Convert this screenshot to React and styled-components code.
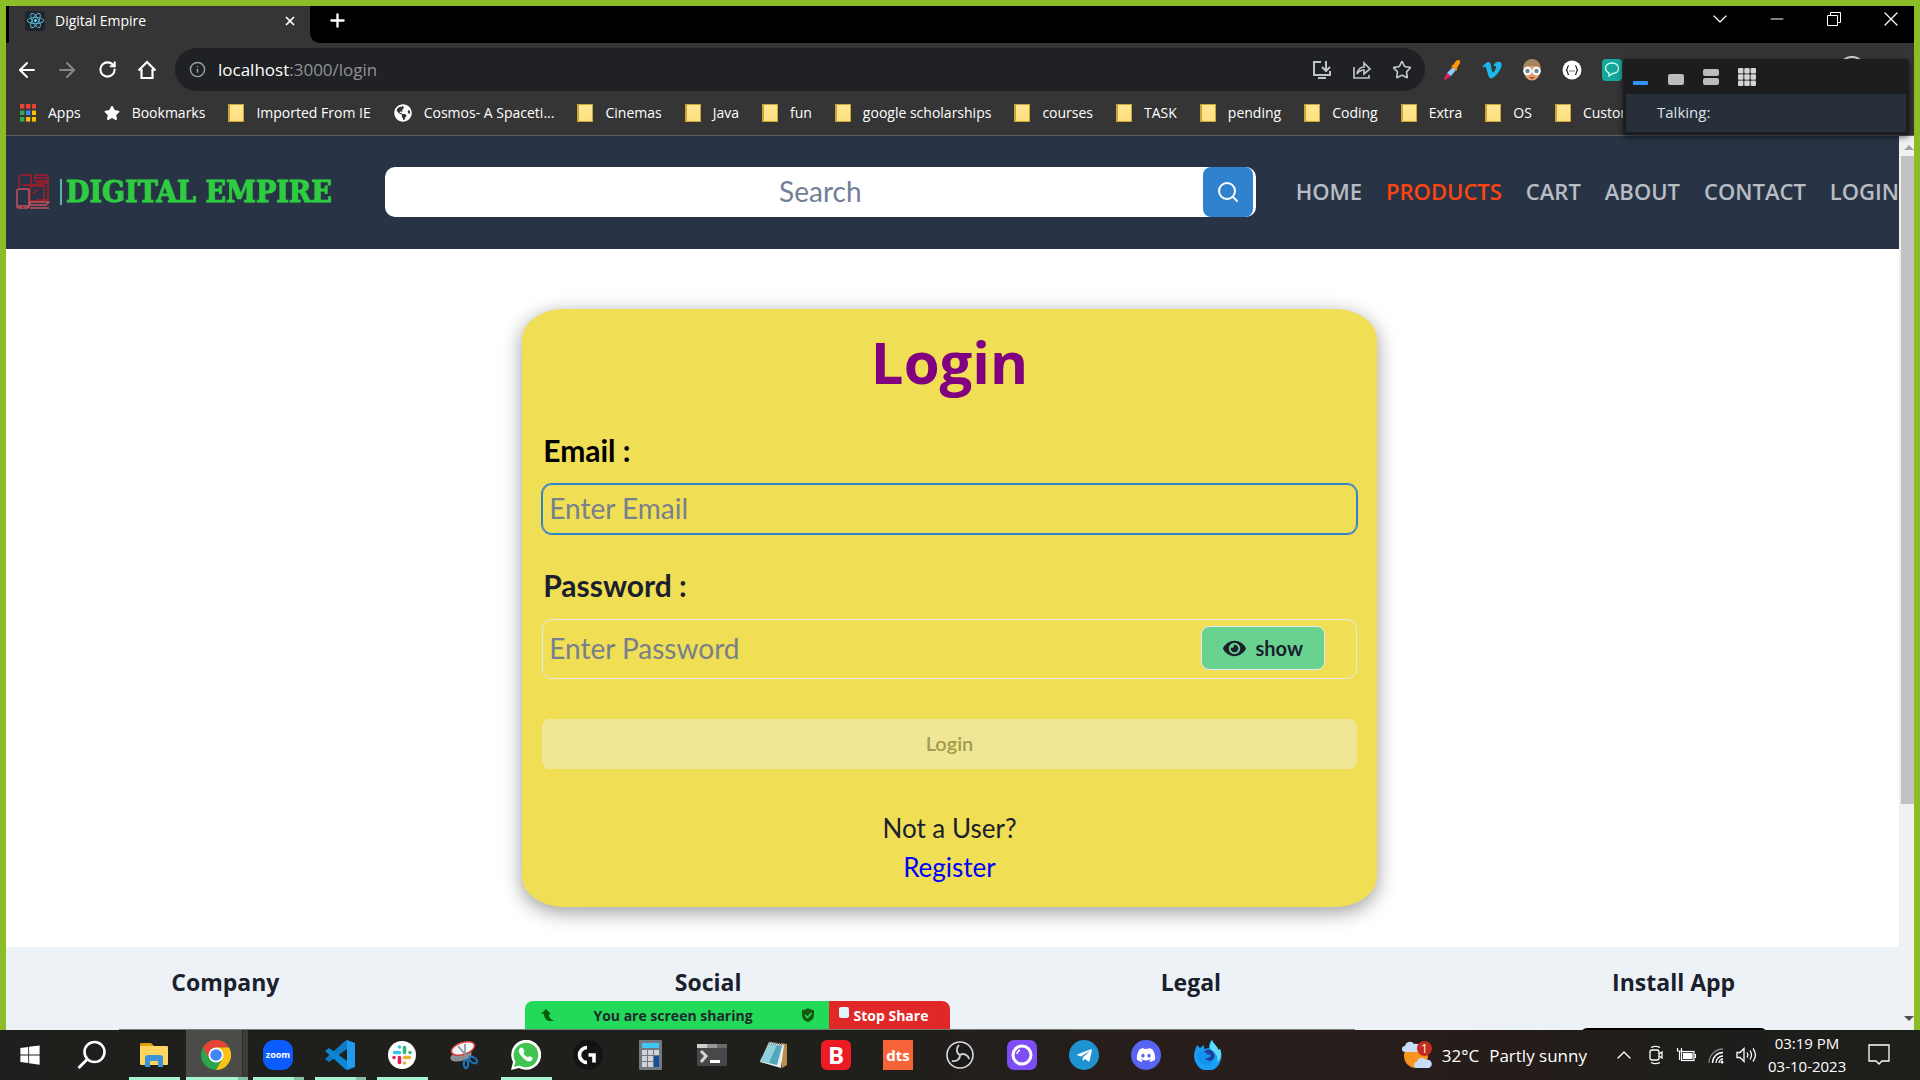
import React from 'react';
import styled, { createGlobalStyle } from 'styled-components';
import {
  ArrowLeft, ArrowRight, RotateCw, Info, MonitorDown, Star, Search,
  Puzzle, PanelRight, MoreVertical, ChevronDown, ChevronUp, Minus, X, Plus,
} from 'lucide-react';
import { FaReact, FaEye, FaVimeoV, FaWindows, FaTelegramPlane, FaDiscord, FaStar, FaGlobeAmericas } from 'react-icons/fa';

const ui = '"Open Sans", "Noto Sans", sans-serif';
const form = 'Lato, "Open Sans", sans-serif';

const GlobalStyle = createGlobalStyle`
  *, *::before, *::after { box-sizing: border-box; }
  body { margin: 0; font-family: ${ui}; overflow: hidden; }
  button, input { font: inherit; color: inherit; margin: 0; }
  button { border: 0; background: none; padding: 0; cursor: pointer; }
  a { text-decoration: none; color: inherit; }
  h1, h2, p { margin: 0; }
  svg { display: block; flex: none; }
`;

/* ---------- desktop ---------- */

const Desktop = styled.div`
  position: relative;
  height: 100vh;
  display: flex;
  flex-direction: column;
  overflow: hidden;
`;

const SharedWindow = styled.div`
  position: relative;
  flex: 1;
  min-height: 0;
  display: flex;
  flex-direction: column;
`;

const ShareFrame = styled.div`
  position: absolute;
  inset: 0;
  border: 6px solid #8cbd28;
  border-bottom: 0;
  pointer-events: none;
`;

/* ---------- browser chrome ---------- */

const TabStrip = styled.div`
  display: flex;
  align-items: stretch;
  height: 43px;
  padding-left: 9px;
  background: #000;
  color: #fff;
`;

const Tab = styled.div`
  position: relative;
  display: flex;
  align-items: center;
  width: 301px;
  padding: 0 13px 2px 16px;
  background: #353535;
  font-size: 14px;
  &::after {
    content: '';
    position: absolute;
    left: 100%;
    bottom: 0;
    width: 10px;
    height: 10px;
    background: radial-gradient(circle at 100% 0, transparent 10px, #353535 10px);
  }
`;

const TabIcon = styled.span`
  display: grid;
  place-items: center;
  width: 20px;
  height: 20px;
  margin-right: 10px;
  border-radius: 3px;
  background: #20232a;
  color: #61dafb;
`;

const TabTitle = styled.span`
  flex: 1;
`;

const IconButton = styled.button`
  display: grid;
  place-items: center;
  width: ${p => p.$w || 40}px;
  height: 40px;
  color: ${p => p.$color || '#fff'};
`;

const WindowControls = styled.div`
  display: flex;
  align-items: center;
  margin: 0 1px 0 auto;
  height: 38px;
`;

const Toolbar = styled.div`
  display: flex;
  align-items: center;
  height: 53px;
  padding: 0 8px 0 7px;
  background: #353535;
`;

const AddressBar = styled.div`
  flex: 1;
  display: flex;
  align-items: center;
  height: 43px;
  margin: 0 7px 0 8px;
  padding: 0 3px 0 14px;
  border-radius: 22px;
  background: #202124;
  color: #9aa0a6;
  font-size: 17px;
`;

const Url = styled.span`
  flex: 1;
  padding-left: 12px;
  color: #8f9296;
  b { font-weight: 400; color: #fff; }
`;

const BookmarksBar = styled.div`
  display: flex;
  align-items: center;
  gap: 23px;
  height: 40px;
  padding: 0 20px 6px;
  border-bottom: 1px solid #5c605f;
  background: #353535;
  color: #fff;
  font-size: 14px;
  overflow: hidden;
`;

const Bookmark = styled.a`
  display: flex;
  align-items: center;
  gap: 12px;
  line-height: 20px;
  white-space: nowrap;
`;

const Folder = styled.span`
  width: 16px;
  height: 18px;
  border: 1px solid #c9a437;
  border-left-width: 2px;
  background: linear-gradient(#ffe794, #ffdf80);
`;

/* ---------- web page ---------- */

const Viewport = styled.div`
  flex: 1;
  min-height: 0;
  display: flex;
`;

const Page = styled.div`
  flex: 1;
  min-width: 0;
  overflow: hidden;
  background: #fff;
`;

const ScrollTrack = styled.div`
  width: 21px;
  padding: 9px 6px 9px 2px;
  display: flex;
  flex-direction: column;
  align-items: flex-end;
  background: #f1f1f1;
`;

const ScrollThumb = styled.div`
  align-self: stretch;
  height: 74%;
  margin: 6px 0 auto;
  background: #c1c1c1;
`;

const Header = styled.header`
  display: flex;
  align-items: center;
  height: 113px;
  padding: 0 0 2px 16px;
  background: #283445;
`;

const Logo = styled.a`
  display: flex;
  align-items: center;
  width: 318px;
  margin-right: 51px;
  color: #2ecc40;
  font: bold 30px/50px "DejaVu Serif Condensed", "DejaVu Serif", serif;
  -webkit-text-stroke: 1px #2ecc40;
  white-space: nowrap;
`;

const LogoRule = styled.span`
  width: 2px;
  height: 26px;
  margin: 0 4px 0 10px;
  background: #5fb3ae;
`;

const SearchBox = styled.form`
  flex: 1;
  display: flex;
  height: 50px;
  padding-right: 3px;
  border-radius: 10px;
  background: #fff;
`;

const SearchInput = styled.input`
  flex: 1;
  min-width: 0;
  padding: 0 0 2px 53px;
  border: 0;
  outline: 0;
  background: none;
  text-align: center;
  font: 400 28px ${form};
  &::placeholder { color: #718096; opacity: 1; }
`;

const SearchButton = styled.button`
  display: grid;
  place-items: center;
  width: 50px;
  border-radius: 8px;
  background: #3182ce;
  color: #fff;
`;

const Nav = styled.nav`
  display: flex;
  gap: 24px;
  margin-left: 40px;
  padding-bottom: 2px;
`;

const NavLink = styled.a`
  color: ${p => (p.$active ? '#ff4410' : '#b9bdc3')};
  font-size: 22px;
  font-weight: 600;
`;

const Card = styled.form`
  display: flex;
  flex-direction: column;
  width: 45%;
  margin: 60px auto 40px;
  padding: 20px;
  border-radius: 5%;
  background: #f0de55;
  box-shadow: 0 5px 20px rgba(0, 0, 0, 0.4);
  color: #1a202c;
  font-family: ${form};
`;

const Title = styled.h1`
  margin-bottom: 4px;
  color: #800080;
  font: 700 58px/66px ${ui};
  text-align: center;
`;

const Label = styled.label`
  margin: 35px 0 18px 1px;
  font-size: 30px;
  line-height: 32px;
  font-weight: 700;
  color: ${p => (p.$dark ? '#000' : '#1a202c')};
`;

const Field = styled.div`
  display: flex;
  align-items: center;
  height: ${p => p.$h}px;
  padding-bottom: 2px;
  border: 1px solid ${p => (p.$focus ? '#3182ce' : '#e2e8f0')};
  border-radius: 10px;
  box-shadow: ${p => (p.$focus ? '0 0 0 1px #3182ce' : 'none')};
`;

const FieldInput = styled.input`
  flex: 1;
  min-width: 0;
  height: 100%;
  padding: 0 6px;
  border: 0;
  outline: 0;
  background: none;
  font-size: 28px;
  &::placeholder { color: #77808c; opacity: 1; }
`;

const ShowButton = styled.button`
  display: flex;
  align-items: center;
  justify-content: center;
  gap: 10px;
  width: 124px;
  height: 44px;
  margin-right: 31px;
  border: 1px solid #e2e8f0;
  border-radius: 8px;
  background: #68d391;
  font-size: 20px;
  font-weight: 700;
`;

const SubmitButton = styled.button`
  height: 50px;
  margin: 40px 0;
  padding-bottom: 2px;
  border-radius: 8px;
  background: #efe796;
  color: #a49c4c;
  font-size: 20px;
  font-weight: 600;
`;

const Note = styled.p`
  font-size: 26px;
  line-height: 39px;
  text-align: center;
  a { color: #0000ff; }
`;

const Footer = styled.footer`
  display: grid;
  grid-template-columns: repeat(4, 1fr);
  gap: 32px;
  min-height: 240px;
  padding-top: 20px;
  background: #edf2f7;
  color: #1a202c;
  text-align: center;
`;

const FooterTitle = styled.h2`
  font-size: 23px;
  line-height: 30px;
  font-weight: 700;
`;

const StoreBadge = styled.div`
  width: 186px;
  height: 56px;
  margin: 31px auto 0;
  border-radius: 6px;
  background: #000;
`;

/* ---------- meeting overlays ---------- */

const TalkPanel = styled.div`
  position: absolute;
  top: 59px;
  right: 11px;
  width: 286px;
  padding: 0 3px 3px;
  border-radius: 4px;
  background: #1c1d1f;
  box-shadow: 0 2px 6px rgba(0, 0, 0, 0.6);
`;

const TalkTools = styled.div`
  display: flex;
  gap: 19px;
  height: 35px;
  padding: 6px 0 0 7px;
`;

const TalkBody = styled.div`
  height: 38px;
  padding-left: 31px;
  background: #27303a;
  color: #dfe2e5;
  font-size: 15px;
  line-height: 36px;
`;

const ShareDock = styled.div`
  position: absolute;
  left: 119px;
  bottom: 0;
  width: 1236px;
  display: flex;
  justify-content: center;
  border-bottom: 1px solid #777b78;
`;

const ShareStatus = styled.div`
  display: flex;
  align-items: center;
  width: 304px;
  height: 28px;
  padding: 0 14px 0 16px;
  border-top-left-radius: 8px;
  background: #23d959;
  color: #1f2a2c;
  font-size: 14px;
  font-weight: 700;
  span { flex: 1; padding-right: 8px; text-align: center; }
`;

const StopButton = styled.button`
  display: flex;
  align-items: center;
  gap: 5px;
  width: 121px;
  height: 28px;
  padding-left: 10px;
  border-top-right-radius: 8px;
  background: #e02828;
  color: #fff;
  font-size: 14px;
  font-weight: 700;
  &::before {
    content: '';
    width: 10px;
    height: 11px;
    margin-bottom: 5px;
    border-radius: 2px;
    background: #dff7fa;
  }
`;

/* ---------- taskbar ---------- */

const Taskbar = styled.div`
  display: flex;
  height: 50px;
  background: linear-gradient(90deg, #1f201d 0%, #1f1f1c 45%, #281e1b 62%, #261d1a 78%, #1d1e1b 90%, #1d1f1b 100%);
  color: #fff;
`;

const TaskButton = styled.button`
  position: relative;
  display: grid;
  place-items: center;
  width: 62px;
  height: 50px;
  padding-right: 2px;
  background: ${p => (p.$active ? 'linear-gradient(90deg, #4b4b48 56px, #2c2c2a 56px, #2c2c2a 57px, #3b3b39 57px)' : 'none')};
  &::after {
    content: '';
    position: absolute;
    left: ${p => (p.$active ? 0 : 5)}px;
    right: ${p => (p.$active ? 0 : 6)}px;
    bottom: 0;
    height: 3px;
    background: ${p => (p.$stack ? 'linear-gradient(270deg, #86c2a5 10px, #a6f4d0 10px)' : '#a6f4d0')};
    opacity: ${p => (p.$open ? 1 : 0)};
  }
`;

const Tray = styled.div`
  display: flex;
  align-items: center;
  gap: 10px;
  margin-left: auto;
  padding-right: 30px;
  font-size: 17px;
`;

const Weather = styled.button`
  display: flex;
  align-items: center;
  gap: 10px;
  margin-right: 15px;
`;

const Clock = styled.time`
  width: 78px;
  margin-right: 12px;
  font-size: 15px;
  line-height: 23px;
  text-align: center;
  white-space: nowrap;
`;

/* ---------- drawings ---------- */

const AppsGrid = () => (
  <svg width="16" height="18" viewBox="0 0 16 18">
    {['#ea4335', '#ea4335', '#ea4335', '#34a853', '#4285f4', '#fbbc05', '#34a853', '#fbbc05', '#fbbc05'].map((c, i) => (
      <rect key={i} x={(i % 3) * 6} y={Math.floor(i / 3) * 6.5} width="4.4" height="4.6" fill={c} />
    ))}
  </svg>
);

const HomeOutline = () => (
  <svg width="20" height="20" viewBox="0 0 20 20" fill="none" stroke="#fff" strokeWidth="2.2">
    <path d="M1.500 10.500L10 2l8.500 8.500M4.500 9v9h11V9" />
  </svg>
);

const Devices = () => (
  <svg width="34" height="36" viewBox="0 0 34 36" fill="none" stroke="#a51d2a" strokeWidth="1.5">
    <path d="M3 14V3l2-2h10v9M19 1h13v6H19zM19 4h13M20 9h12v17H20" />
    <path d="M14 12h14v15H14zM6 11h22M17 20l5-5" />
    <rect x="1" y="15" width="12" height="19" rx="2" stroke="#c2525c" />
    <path d="M1 32h12M14 31h16l3-3H14zM14 34h19" stroke="#c2525c" />
    <path d="M6 33h2" />
  </svg>
);

const Restore = () => (
  <svg width="14" height="14" viewBox="0 0 14 14" fill="none" stroke="#fff">
    <path d="M.5 3.5h10v10H.5zM3.5 3V.5h10v10H11" />
  </svg>
);

const ShareIcon = () => (
  <svg width="20" height="20" viewBox="0 0 20 20" fill="none" stroke="currentColor" strokeWidth="1.7">
    <path d="M2 7v11h15v-3M5 14c1-5 4-7 7-7V3l6 6-6 5v-4c-3 0-5 1-7 4z" />
  </svg>
);

const InstallIcon = () => (
  <svg width="20" height="20" viewBox="0 0 20 20" fill="none" stroke="currentColor" strokeWidth="2">
    <path d="M9 2H2v13h16v-4M14 1v9M10 7l4 4 4-4M6 18h8" />
  </svg>
);

const Picker = () => (
  <svg width="20" height="22" viewBox="0 0 20 22">
    <path d="M2 20l3-6 4 3-6 4z" fill="#e91e63" />
    <path d="M5 14l6-6 3 3-5 6z" fill="#90caf9" />
    <path d="M9 7l2-1 3-4c2-2 5-1 4 2l-3 5 0 3z" fill="#ff9800" />
  </svg>
);

const Face = () => (
  <svg width="20" height="22" viewBox="0 0 20 22">
    <ellipse cx="10" cy="11" rx="8.5" ry="10.5" fill="#e0a070" />
    <path d="M1 10C1 4 5 0 10 0s9 4 9 10l-4-3H5z" fill="#a48560" />
    <circle cx="5.5" cy="12" r="4.3" fill="#fff" /><circle cx="14.5" cy="12" r="4.3" fill="#fff" />
    <circle cx="5.5" cy="12" r="2.2" fill="#5f8ba0" /><circle cx="14.5" cy="12" r="2.2" fill="#5f8ba0" />
    <path d="M7 18h6l-3 2z" fill="#c0392b" />
  </svg>
);

const Braces = () => (
  <svg width="20" height="20" viewBox="0 0 20 20">
    <circle cx="10" cy="10" r="9.5" fill="#fff" />
    <path d="M7 5.500c-2 0-1 3.500-2.500 4.500 1.500 1 .5 4.500 2.500 4.500M13 5.500c2 0 1 3.500 2.500 4.500-1.500 1-.5 4.500-2.500 4.500" fill="none" stroke="#222" strokeWidth="1.2" />
    <path d="M7.500 11h1.200M9.500 11h1.200M11.500 11h1.200" stroke="#222" strokeWidth="1.2" />
  </svg>
);

const Bubble = () => (
  <svg width="20" height="22" viewBox="0 0 20 22">
    <rect width="20" height="22" rx="4" fill="#14a89a" />
    <path d="M10 4c4 0 6.500 2.300 6.500 5.300S14 14.500 10.500 14.500L7 17v-3C4.800 13 3.500 11.500 3.500 9.300 3.500 6.300 6 4 10 4z" fill="none" stroke="#d8fff6" strokeWidth="1.3" />
  </svg>
);

const OrangeTile = () => <svg width="16" height="22" viewBox="0 0 16 22"><rect width="16" height="22" rx="3" fill="#d9541e" /></svg>;
const Avatar = () => <svg width="28" height="28" viewBox="0 0 28 28"><circle cx="14" cy="14" r="13" fill="#353535" stroke="#d8d8d8" strokeWidth="2" /></svg>;

const ViewMin = () => <svg width="16" height="22" viewBox="0 0 16 22"><rect x="0" y="16" width="15" height="4" rx="1" fill="#3492f5" /></svg>;
const ViewOne = () => <svg width="16" height="22" viewBox="0 0 16 22"><rect y="9" width="16" height="11" rx="2" fill="#bcbcbc" /></svg>;
const ViewTwo = () => (
  <svg width="16" height="22" viewBox="0 0 16 22"><rect y="4" width="16" height="7" rx="2" fill="#bcbcbc" /><rect y="13" width="16" height="7" rx="2" fill="#bcbcbc" /></svg>
);
const ViewGrid = () => (
  <svg width="18" height="22" viewBox="0 0 18 22">
    {[0, 1, 2, 3, 4, 5, 6, 7, 8].map(i => <rect key={i} x={(i % 3) * 6.3} y={3 + Math.floor(i / 3) * 6.3} width="5.4" height="5.4" rx="1" fill="#d5d5d5" />)}
  </svg>
);

const ArrowTriangle = ({ down, color }) => (
  <svg width="10" height="5" viewBox="0 0 10 5"><path d={down ? 'M0 0h10L5 5z' : 'M0 5h10L5 0z'} fill={color} /></svg>
);

const Shield = () => (
  <svg width="14" height="14" viewBox="0 0 14 14"><path d="M7 0c2 1.500 4 2 6 2v5c0 4-3 6-6 7-3-1-6-3-6-7V2c2 0 4-.5 6-2z" fill="#14590f" /><path d="M4 7l2.500 2.500L10.500 5" fill="none" stroke="#23d959" strokeWidth="1.6" /></svg>
);
const UpArrow = () => (
  <svg width="13" height="13" viewBox="0 0 13 13"><path d="M5 0l5 5H8c0 3 1 5 5 7H8C4 11 3 8 3 5H0z" fill="#075c07" /></svg>
);

const Explorer = () => (
  <svg width="28" height="24" viewBox="0 0 28 24">
    <path d="M0 1a1 1 0 011-1h10l3 3v4H0z" fill="#e0a006" /><rect y="3" width="28" height="19" rx="1" fill="#ffd562" />
    <path d="M5 24V15a3 3 0 013-3h12a3 3 0 013 3v9h-5v-6h-8v6z" fill="#3c94d8" />
  </svg>
);

const TaskSearch = () => (
  <svg width="30" height="30" viewBox="0 0 30 30" fill="none" stroke="#fff" strokeWidth="2.6">
    <circle cx="17.500" cy="12" r="10" /><path d="M10 19.500L1.500 28" strokeWidth="3" />
  </svg>
);

const Chrome = () => (
  <svg width="30" height="30" viewBox="0 0 30 30">
    <circle cx="15" cy="15" r="15" fill="#2ba24c" />
    <path d="M2 7.500A15 15 0 0128 7.500H15L8.500 18.750z" fill="#ea4335" />
    <path d="M28 7.500A15 15 0 0115 30L21.500 18.750 15 7.500z" fill="#fbc116" />
    <circle cx="15" cy="15" r="7.500" fill="#fff" /><circle cx="15" cy="15" r="5.800" fill="#4285f4" />
  </svg>
);

const VsCode = () => (
  <svg width="30" height="30" viewBox="0 0 30 30">
    <path d="M22 0l8 3v24l-8 3z" fill="#1f9cf0" /><path d="M22 0v9L4 22l-4-3L20 1z" fill="#0f7bc4" /><path d="M22 30v-9L4 8l-4 3 20 18z" fill="#0f86d3" />
  </svg>
);

const Slack = () => (
  <svg width="28" height="28" viewBox="0 0 28 28">
    <circle cx="14" cy="14" r="14" fill="#fff" />
    <g strokeWidth="3.6" strokeLinecap="round" fill="none">
      <path d="M11.500 6v0M6.500 11.500h5" stroke="#36c5f0" /><path d="M16.500 6.500v5M22 11.500v0" stroke="#2eb67d" />
      <path d="M16.500 16.500h5M16.500 22v0" stroke="#ecb22e" /><path d="M11.500 16.500v5M6 16.500v0" stroke="#e01e5a" />
    </g>
  </svg>
);

const Snip = () => (
  <svg width="28" height="28" viewBox="0 0 28 28">
    <ellipse cx="11" cy="15" rx="11" ry="5" fill="#8a8f94" transform="rotate(-15 11 15)" />
    <ellipse cx="13" cy="7.500" rx="12" ry="6" fill="#f3f3f5" stroke="#d63a3a" strokeWidth="1.5" transform="rotate(-18 13 7.500)" />
    <path d="M8 5l12 14M15 3v15" stroke="#8a8f94" strokeWidth="1.6" />
    <g fill="none" stroke="#1b76bd" strokeWidth="2"><ellipse cx="16" cy="23" rx="2.200" ry="4" /><ellipse cx="23" cy="19" rx="4.500" ry="2.600" transform="rotate(30 23 19)" /></g>
  </svg>
);

const WhatsApp = () => (
  <svg width="30" height="30" viewBox="0 0 30 30">
    <path d="M0 30l2-8A15 15 0 118 28z" fill="#fff" /><path d="M3 27l1.500-5.500A12.300 12.300 0 118.500 25.500z" fill="#3fc351" />
    <path d="M10 7.500c-3 1.500-3 5 1 9.500s8.500 6 10.500 2.500c.8-1.500 0-2-1.500-2.800s-2-.8-3 .6c-2-.6-4-2.600-4.600-4.300 1.300-1 1.200-1.700.4-3.300-.7-1.600-1.300-2.700-2.800-2.200z" fill="#fff" />
  </svg>
);

const LogiG = () => (
  <svg width="30" height="30" viewBox="0 0 30 30"><circle cx="15" cy="15" r="15" fill="#131313" /><path d="M14 7.500a7.500 7.500 0 000 15M15.500 15H21v7.500" fill="none" stroke="#fff" strokeWidth="3.6" /></svg>
);

const Calc = () => (
  <svg width="23" height="30" viewBox="0 0 23 30">
    <rect width="23" height="30" rx="1" fill="#74797f" /><rect x="3" y="3" width="17" height="5" fill="#3fc8f4" />
    {[0, 1, 2, 3, 4, 6, 7].map(i => <rect key={i} x={3 + (i % 3) * 6} y={10 + Math.floor(i / 3) * 6} width="5" height="5" fill="#cdd3d9" />)}
    <rect x="15" y="16" width="5" height="11" fill="#124f9c" />
  </svg>
);

const Terminal = () => (
  <svg width="30" height="22" viewBox="0 0 30 22"><rect width="30" height="22" rx="1" fill="#47484a" /><path d="M0 0h10v4H0z" fill="#cfcfcf" /><path d="M10 0h10v4H10z" fill="#989898" /><path d="M20 0h10v4H20z" fill="#6a6a6a" /><path d="M4 7l5 5-5 6" fill="none" stroke="#d4d4d4" strokeWidth="3" /><path d="M13 17.500h10" stroke="#fff" strokeWidth="3" /></svg>
);

const Notepad = () => (
  <svg width="28" height="28" viewBox="0 0 28 28"><path d="M21 2l6 1v21l-5 3z" fill="#b58f45" /><path d="M9 1l15 3-3 23-21-6z" fill="#e6eef0" /><path d="M9 3l13 2-5 19-17-4z" fill="#4ea7bb" /><path d="M9 3l8 1-8 18-9-2z" fill="#8fd0dc" /><path d="M9 2l14 2" stroke="#8b9499" strokeWidth="3" strokeDasharray="1 1" /></svg>
);

const Tile = styled.span`
  display: grid;
  place-items: center;
  width: 30px;
  height: 30px;
  border-radius: ${p => p.$r}px;
  background: ${p => p.$bg};
  font: 700 ${p => p.$size || 16}px/28px ${ui};
  color: #fff;
`;

const Obs = () => (
  <svg width="28" height="28" viewBox="0 0 28 28" fill="none"><circle cx="14" cy="14" r="13" fill="#1b191c" stroke="#dcdcdc" strokeWidth="1.6" />
    {[0, 120, 240].map(a => <path key={a} d="M14 14c-4-2-4-7-1-10" stroke="#d0d0d0" strokeWidth="1.8" transform={`rotate(${a} 14 14)`} />)}
  </svg>
);

const Ring = () => <svg width="22" height="22" viewBox="0 0 22 22" fill="none" stroke="#fff"><circle cx="11" cy="11" r="9" strokeWidth="3" /><path d="M6 10c0-2 1-3 3-4" strokeWidth="1.5" /></svg>;

const Firefox = () => (
  <svg width="28" height="30" viewBox="0 0 28 30">
    <path d="M2 8l1-3 3 3 4-3v4l5-1c0-4 1-6 3-8 1 4 6 6 6 10l2-1c2 4 2 9 0 13a13 13 0 01-24 1C-1 18 0 12 2 8z" fill="#1b9df5" />
    <path d="M18 0c1 4 6 6 6 10l2-1c2 6 1 10-3 13 1-5 0-8-5-11-3-3-2-8 0-11z" fill="#5fdcfb" />
    <circle cx="14.500" cy="15.500" r="6" fill="#1c3f97" />
    <path d="M4 12c3-2 7-1 9 2l4 1c-1 3-4 4-6 3 1 3 6 4 9 1-1 5-7 7-11 5s-6-7-5-12z" fill="#1292ee" />
  </svg>
);

const WeatherIcon = () => (
  <svg width="30" height="28" viewBox="0 0 30 28"><circle cx="14" cy="15" r="12" fill="#f7961e" />
    <path d="M3 11a3 3 0 010-6 5 5 0 019-2 4 4 0 013 8z" fill="#c9dcf8" /><path d="M15 27a3 3 0 010-6 5 5 0 019-2 4 4 0 013 8z" fill="#c9dcf8" />
    <circle cx="22.500" cy="7.500" r="7.500" fill="#c42b1c" /><text x="22.500" y="12" fontSize="12" fill="#fff" textAnchor="middle">1</text>
  </svg>
);

const MeetNow = () => <svg width="20" height="20" viewBox="0 0 20 20" fill="none" stroke="#fff" strokeWidth="1.3"><rect x="4" y="5" width="9" height="10" rx="2" /><path d="M13 9l3-2v6l-3-2M5 2.500c3-1.500 6-1.500 9 0M5 17.500c3 1.500 6 1.500 9 0" /></svg>;
const Battery = () => <svg width="20" height="16" viewBox="0 0 20 16" fill="none" stroke="#fff" strokeWidth="1.2"><path d="M1.500 1v3h4V1M3.500 4v9" /><rect x="5.500" y="4.500" width="12.500" height="9" /><rect x="7.500" y="6.500" width="8.500" height="5" fill="#fff" /><path d="M19.500 7v4" /></svg>;
const Signal = () => <svg width="20" height="20" viewBox="0 0 20 20" fill="none" stroke="#fff" strokeWidth="1.3"><path d="M3 18A14 14 0 0117 4" stroke="#888" /><path d="M6.500 18A10.500 10.500 0 0117 7.500M10 18a7 7 0 017-7" /><path d="M13 18a4 4 0 014-4" /><circle cx="16" cy="17" r="1.500" fill="#fff" stroke="none" /></svg>;
const Speaker = () => <svg width="22" height="18" viewBox="0 0 22 18" fill="none" stroke="#fff" strokeWidth="1.3"><path d="M1 6.500h3l4-4v13l-4-4H1zM11 6.500c1 1.500 1 3.500 0 5M14 4.500c2 3 2 6 0 9M17 2.500c3 4 3 9 0 13" /></svg>;
const Notice = () => <svg width="22" height="22" viewBox="0 0 22 22" fill="none" stroke="#fff" strokeWidth="1.3"><path d="M1 1h20v16h-7l-3 3-3-3H1z" /></svg>;

/* ---------- data ---------- */

const folders = ['Cinemas', 'Java', 'fun', 'google scholarships', 'courses', 'TASK', 'pending', 'Coding', 'Extra', 'OS', 'Custom'];
const navItems = ['HOME', 'PRODUCTS', 'CART', 'ABOUT', 'CONTACT', 'LOGIN'];

const extensions = [
  ['Color picker', <Picker />], ['Vimeo', <FaVimeoV size={22} color="#1ab7ea" />], ['Reader', <Face />],
  ['JSON viewer', <Braces />], ['Chat', <Bubble />], ['Extension', <Puzzle size={16} />], ['Notes', <OrangeTile />],
  ['Extensions', <Puzzle size={16} />], ['Side panel', <PanelRight size={16} />], ['Downloads', <MonitorDown size={16} />],
  ['Profile', <Avatar />], ['Menu', <MoreVertical size={16} />],
];

const apps = [
  { name: 'Start', icon: <FaWindows size={22} /> },
  { name: 'Search', icon: <TaskSearch /> },
  { name: 'File Explorer', icon: <Explorer />, open: true },
  { name: 'Chrome', icon: <Chrome />, open: true, active: true, stack: true },
  { name: 'Zoom', icon: <Tile $r={11} $bg="#0b5cff" $size={9}>zoom</Tile>, open: true, stack: true },
  { name: 'Visual Studio Code', icon: <VsCode />, open: true, stack: true },
  { name: 'Slack', icon: <Slack />, open: true },
  { name: 'Snipping Tool', icon: <Snip /> },
  { name: 'WhatsApp', icon: <WhatsApp />, open: true },
  { name: 'G Hub', icon: <LogiG /> },
  { name: 'Calculator', icon: <Calc /> },
  { name: 'Terminal', icon: <Terminal /> },
  { name: 'Notepad', icon: <Notepad /> },
  { name: 'Bitdefender', icon: <Tile $r={6} $bg="#ed1c24" $size={24}>B</Tile> },
  { name: 'DTS', icon: <Tile $r={0} $bg="#f8643a" $size={15}>dts</Tile> },
  { name: 'OBS', icon: <Obs /> },
  { name: 'Alexa', icon: <Tile $r={7} $bg="#7f4df5"><Ring /></Tile> },
  { name: 'Telegram', icon: <Tile $r={15} $bg="#1f93cf"><FaTelegramPlane size={17} /></Tile> },
  { name: 'Discord', icon: <Tile $r={15} $bg="#5865f2"><FaDiscord size={20} /></Tile> },
  { name: 'Firefox', icon: <Firefox /> },
];

export default function App() {
  return (
    <Desktop>
      <GlobalStyle />
      <SharedWindow>
        <TabStrip>
          <Tab>
            <TabIcon><FaReact size={17} /></TabIcon>
            <TabTitle>Digital Empire</TabTitle>
            <IconButton $w={14} aria-label="Close tab"><X size={14} strokeWidth={3} /></IconButton>
          </Tab>
          <IconButton $w={54} aria-label="New tab"><Plus size={21} strokeWidth={2.6} /></IconButton>
          <WindowControls>
            <IconButton $w={57} aria-label="Tab search"><ChevronDown size={24} strokeWidth={1.2} /></IconButton>
            <IconButton $w={57} aria-label="Minimize"><Minus size={20} strokeWidth={1.4} /></IconButton>
            <IconButton $w={57} aria-label="Restore"><Restore /></IconButton>
            <IconButton $w={57} aria-label="Close"><X size={24} strokeWidth={1.3} /></IconButton>
          </WindowControls>
        </TabStrip>

        <Toolbar>
          <IconButton aria-label="Back"><ArrowLeft size={24} /></IconButton>
          <IconButton aria-label="Forward" $color="#878787"><ArrowRight size={24} /></IconButton>
          <IconButton aria-label="Reload"><RotateCw size={19} strokeWidth={2.6} /></IconButton>
          <IconButton aria-label="Home"><HomeOutline /></IconButton>
          <AddressBar>
            <Info size={17} />
            <Url><b>localhost</b>:3000/login</Url>
            <IconButton aria-label="Install" $color="#c0c3c7"><InstallIcon /></IconButton>
            <IconButton aria-label="Share" $color="#c0c3c7"><ShareIcon /></IconButton>
            <IconButton aria-label="Bookmark" $color="#c0c3c7"><Star size={20} /></IconButton>
          </AddressBar>
          {extensions.map(([name, icon]) => <IconButton key={name} aria-label={name}>{icon}</IconButton>)}
        </Toolbar>

        <BookmarksBar>
          <Bookmark href="#"><AppsGrid />Apps</Bookmark>
          <Bookmark href="#"><FaStar size={16} />Bookmarks</Bookmark>
          <Bookmark href="#"><Folder />Imported From IE</Bookmark>
          <Bookmark href="#"><FaGlobeAmericas size={18} />Cosmos- A Spaceti...</Bookmark>
          {folders.map(name => <Bookmark href="#" key={name}><Folder />{name}</Bookmark>)}
        </BookmarksBar>

        <Viewport>
          <Page>
            <Header>
              <Logo href="#"><Devices /><LogoRule />DIGITAL EMPIRE</Logo>
              <SearchBox>
                <SearchInput aria-label="Search" placeholder="Search" />
                <SearchButton type="button" aria-label="Search"><Search size={24} /></SearchButton>
              </SearchBox>
              <Nav>
                {navItems.map(item => <NavLink key={item} href="#" $active={item === 'PRODUCTS'}>{item}</NavLink>)}
              </Nav>
            </Header>

            <Card>
              <Title>Login</Title>
              <Label htmlFor="email" $dark>Email :</Label>
              <Field $h={50} $focus><FieldInput id="email" type="email" placeholder="Enter Email" /></Field>
              <Label htmlFor="password">Password :</Label>
              <Field $h={60}>
                <FieldInput id="password" type="password" placeholder="Enter Password" />
                <ShowButton type="button"><FaEye size={23} />show</ShowButton>
              </Field>
              <SubmitButton disabled>Login</SubmitButton>
              <Note>Not a User?</Note>
              <Note><a href="#">Register</a></Note>
            </Card>

            <Footer>
              <FooterTitle>Company</FooterTitle>
              <FooterTitle>Social</FooterTitle>
              <FooterTitle>Legal</FooterTitle>
              <div>
                <FooterTitle>Install App</FooterTitle>
                <StoreBadge />
              </div>
            </Footer>
          </Page>
          <ScrollTrack>
            <ArrowTriangle color="#a3a3a3" />
            <ScrollThumb />
            <ArrowTriangle down color="#505050" />
          </ScrollTrack>
        </Viewport>

        <ShareFrame />
        <ShareDock>
          <ShareStatus><UpArrow /><span>You are screen sharing</span><Shield /></ShareStatus>
          <StopButton>Stop Share</StopButton>
        </ShareDock>
        <TalkPanel>
          <TalkTools><ViewMin /><ViewOne /><ViewTwo /><ViewGrid /></TalkTools>
          <TalkBody>Talking:</TalkBody>
        </TalkPanel>
      </SharedWindow>

      <Taskbar>
        {apps.map(a => (
          <TaskButton key={a.name} aria-label={a.name} $open={a.open} $active={a.active} $stack={a.stack}>{a.icon}</TaskButton>
        ))}
        <Tray>
          <Weather><WeatherIcon /><span>32°C</span><span>Partly sunny</span></Weather>
          <ChevronUp size={24} strokeWidth={1.4} />
          <MeetNow />
          <Battery />
          <Signal />
          <Speaker />
          <Clock>03:19 PM<br />03-10-2023</Clock>
          <Notice />
        </Tray>
      </Taskbar>
    </Desktop>
  );
}
